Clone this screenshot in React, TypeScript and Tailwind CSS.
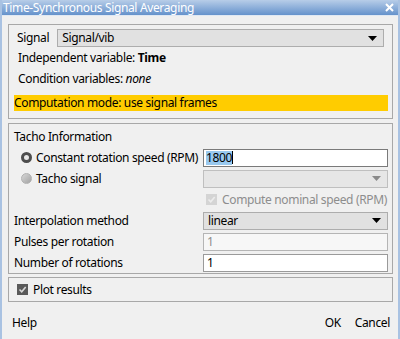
import React from 'react';

function Caret({ disabled }: { disabled?: boolean }) {
  return (
    <svg width="9" height="5" viewBox="0 0 9 5" className="shrink-0">
      <path d="M0 0H9L4.5 5Z" fill={disabled ? '#8a8a8a' : '#000'} />
    </svg>
  );
}

function Select({ value, disabled }: { value?: string; disabled?: boolean }) {
  return (
    <div
      className={
        'h-[18px] flex items-center justify-between pl-[4px] pr-[6px] border ' +
        (disabled ? 'bg-[#e6e6e6] border-[#bfbfbf]' : 'bg-[#e1e1e1] border-[#adadad]')
      }
    >
      <span className="leading-none">{value}</span>
      <Caret disabled={disabled} />
    </div>
  );
}

function CheckBox({ disabled }: { disabled?: boolean }) {
  return (
    <div
      className={
        'w-[11px] h-[11px] flex items-center justify-center shrink-0 ' +
        (disabled ? 'bg-[#d4d4d4]' : 'bg-[#5a5a5a]')
      }
    >
      <svg width="9" height="9" viewBox="0 0 9 9">
        <path d="M1.5 4.5L3.7 6.7L7.7 2" stroke={disabled ? '#ececec' : '#d8d8d8'} strokeWidth="1.6" fill="none" />
      </svg>
    </div>
  );
}

export default function App() {
  const font = { fontFamily: '"Noto Sans", "Open Sans", sans-serif' };

  return (
    <div style={font} className="w-[400px] h-[339px] bg-[#f0f0f0] text-[12px] tracking-[-0.35px] text-black flex flex-col border-x-2 border-[#a9c2e2] overflow-hidden whitespace-nowrap">
      {/* title bar */}
      <div className="h-[16px] -mx-[2px] bg-gradient-to-b from-[#b7cde8] to-[#6592cb] flex items-center justify-between pl-[3px] pr-[6px] border-b border-[#dfe8f3]">
        <span className="text-white leading-[15px]">Time-Synchronous Signal Averaging</span>
        <svg width="9" height="9" viewBox="0 0 9 9">
          <path d="M1 1L8 8M8 1L1 8" stroke="#fff" strokeWidth="2" />
        </svg>
      </div>

      <div className="flex flex-col pl-[6px] pr-[5px] pt-[8px]">
        {/* signal panel */}
        <div className="border border-[#a8a8a8] pt-[4px] pb-[7px]">
          <div className="flex items-center h-[18px] pl-[8px] pr-[8px] gap-[8px]">
            <span>Signal</span>
            <div className="flex-1">
              <Select value="Signal/vib" />
            </div>
          </div>
          <div className="h-[21px] pt-[1px] flex items-center pl-[9px]">
            Independent variable:&nbsp;<b className="font-bold">Time</b>
          </div>
          <div className="h-[20px] pt-[1px] flex items-center pl-[9px]">
            Condition variables:&nbsp;<i>none</i>
          </div>
          <div className="mt-[7px] ml-[5px] mr-[4px] h-[16px] bg-[#ffcc00] flex items-center">
            Computation mode: use signal frames
          </div>
        </div>

        {/* tacho panel */}
        <div className="mt-[4px] border border-[#a8a8a8] pl-[5px] pr-[4px]">
          <div className="h-[23px] pt-[3px] flex items-center">Tacho Information</div>
          <div className="h-[21px] flex items-center">
            <div className="flex-1 flex items-center pl-[7px] gap-[4px]">
              <div className="w-[11px] h-[11px] shrink-0 rounded-full border-[3px] border-[#4d4d4d] bg-[#e8e8e8]" />
              <span>Constant rotation speed (RPM)</span>
            </div>
            <div className="w-[185px] h-[18px] bg-white border border-[#7a7a7a] flex items-center pl-[2px]">
              <span className="bg-[#99c9ef] leading-[14px]">1800</span>
              <span className="w-[1px] h-[13px] bg-black" />
            </div>
          </div>
          <div className="h-[21px] flex items-center">
            <div className="flex-1 flex items-center pl-[7px] gap-[4px]">
              <div className="w-[11px] h-[11px] shrink-0 rounded-full bg-gradient-to-br from-[#d6d6d6] to-[#a3a3a3] border border-[#b0b0b0]" />
              <span>Tacho signal</span>
            </div>
            <div className="w-[185px]">
              <Select disabled />
            </div>
          </div>
          <div className="h-[21px] flex items-center justify-end">
            <div className="w-[185px] flex items-center gap-[5px] pl-[3px] text-[#8d8d8d]">
              <CheckBox disabled />
              <span>Compute nominal speed (RPM)</span>
            </div>
          </div>
          <div className="h-[21px] flex items-center">
            <span className="flex-1">Interpolation method</span>
            <div className="w-[185px]">
              <Select value="linear" />
            </div>
          </div>
          <div className="h-[21px] flex items-center">
            <span className="flex-1">Pulses per rotation</span>
            <div className="w-[185px] h-[18px] bg-[#f7f7f7] border border-[#b5b5b5] flex items-center pl-[3px] text-[#8d8d8d]">
              1
            </div>
          </div>
          <div className="h-[21px] flex items-center">
            <span className="flex-1">Number of rotations</span>
            <div className="w-[185px] h-[18px] bg-white border border-[#9a9a9a] flex items-center pl-[3px]">
              1
            </div>
          </div>
        </div>

        {/* plot panel */}
        <div className="mt-[3px] h-[25px] border border-[#a8a8a8] flex items-center pl-[8px] gap-[5px]">
          <CheckBox />
          <span>Plot results</span>
        </div>

        {/* footer */}
        <div className="h-[38px] pt-[3px] flex items-center justify-between pl-[4px] pr-[3px]">
          <span>Help</span>
          <div className="flex items-center gap-[14px]">
            <span>OK</span>
            <span>Cancel</span>
          </div>
        </div>
      </div>
    </div>
  );
}
